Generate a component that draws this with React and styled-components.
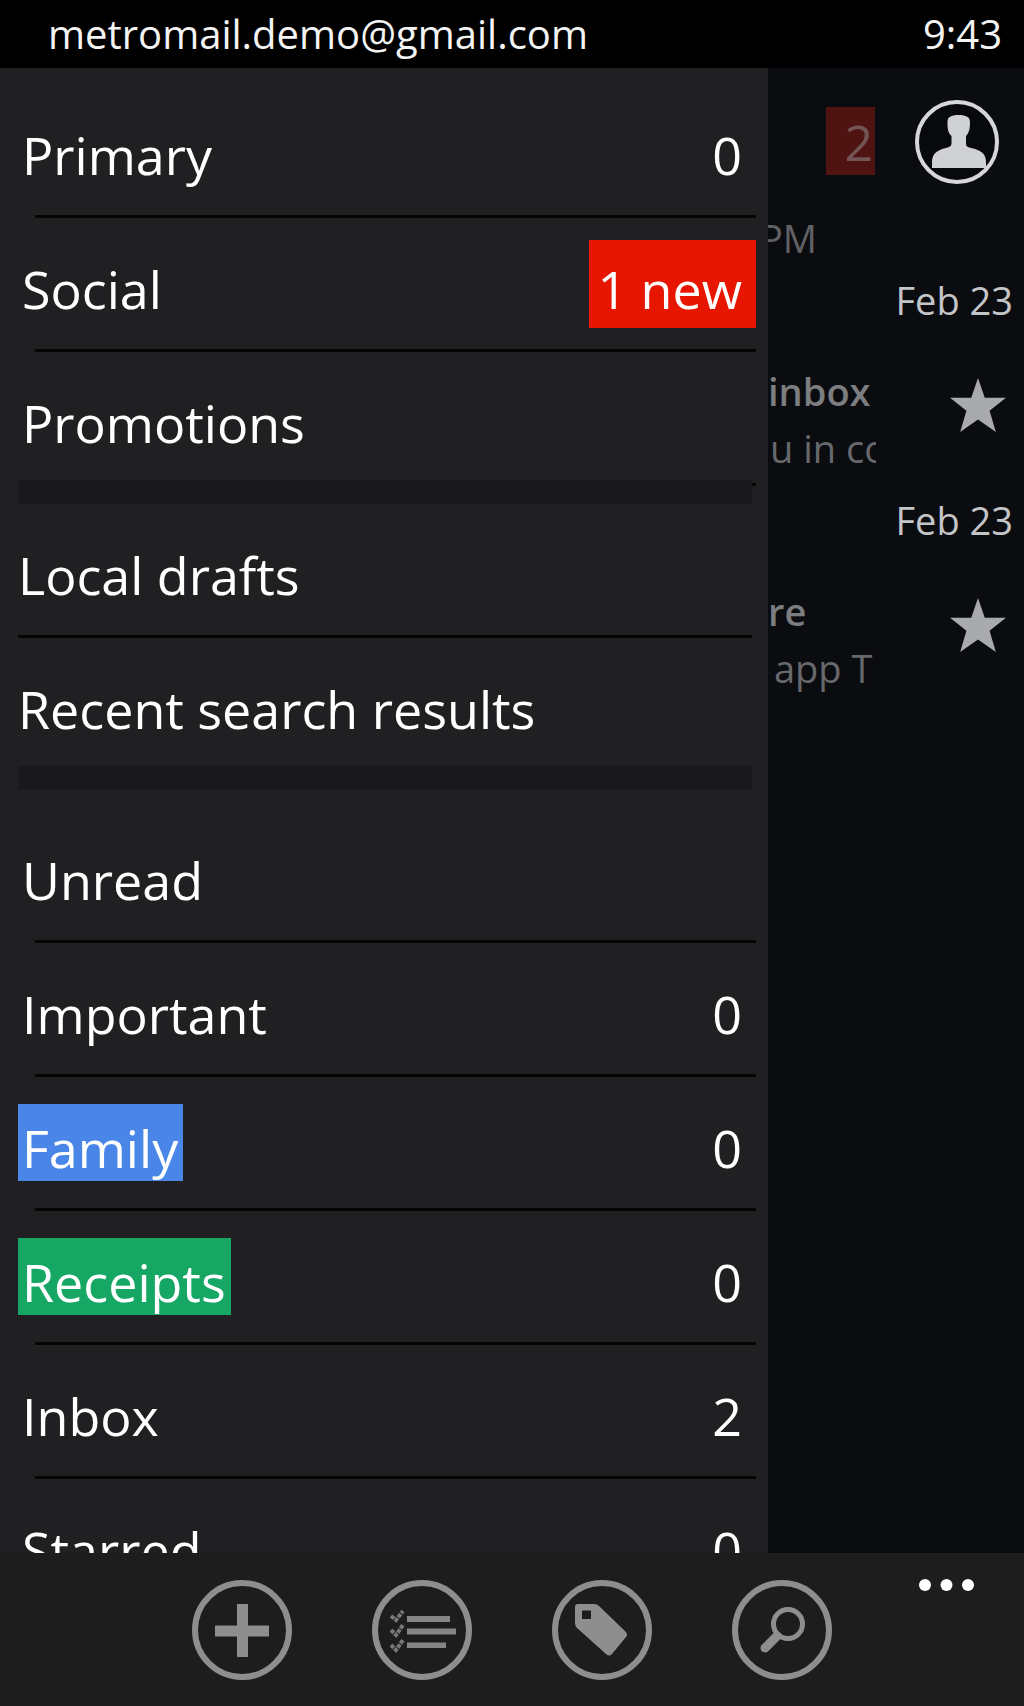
import React, { useState } from "react";
import styled, { createGlobalStyle } from "styled-components";

const GlobalStyle = createGlobalStyle`
  * {
    box-sizing: border-box;
  }
  body {
    margin: 0;
    background: #000;
    color: #fff;
    font-family: "Open Sans", "Noto Sans", sans-serif;
  }
  button {
    margin: 0;
    padding: 0;
    border: 0;
    background: none;
    color: inherit;
    font: inherit;
    text-align: left;
    cursor: pointer;
  }
  svg {
    display: block;
  }
`;

const Phone = styled.div`
  display: flex;
  flex-direction: column;
  height: 100vh;
  overflow: hidden;
`;

const StatusBar = styled.header`
  display: flex;
  justify-content: space-between;
  flex: none;
  height: 68px;
  padding: 0 22px 0 48px;
  color: #f4f4f4;
  font-size: 40px;
  line-height: 68px;
`;

const Main = styled.main`
  display: flex;
  flex: 1;
  min-height: 0;
`;

const Drawer = styled.nav`
  width: 75%;
  background: #202022;
  overflow: hidden;
`;

const Group = styled.ul`
  margin: 0;
  padding: ${(p) => p.$top || 0}px ${(p) => (p.$local ? 16 : 12)}px 0 18px;
  list-style: none;
`;

const Item = styled.li`
  display: flex;
  flex-direction: column;
  height: 134px;

  &::after {
    content: "";
    height: 3px;
    margin-left: ${(p) => (p.$local ? 0 : 17)}px;
    background: #050505;
  }
`;

const RowButton = styled.button`
  display: flex;
  flex: 1;
  align-items: center;
  justify-content: space-between;
  font-size: 52px;
`;

const Label = styled.span`
  padding: 10px 5px 0 ${(p) => (p.$local ? 0 : 4)}px;
  line-height: 67px;
  background: ${(p) => p.$color || "transparent"};
`;

const Count = styled.span`
  padding: 10px 14px 0 8px;
  line-height: 78px;
  background: ${(p) => (p.$fresh ? "#e61600" : "transparent")};
`;

const Band = styled.div`
  position: relative;
  height: 24px;
  margin: -6px 16px 0 18px;
  background: #19191b;
`;

const MailPane = styled.section`
  flex: 1;
  min-width: 0;
  padding-top: 32px;
  background: #0b0c10;
  overflow: hidden;
`;

const PaneHeader = styled.div`
  display: flex;
  align-items: flex-start;
  justify-content: flex-end;
  gap: 40px;
  height: 114px;
  padding-right: 25px;
`;

const Unseen = styled.span`
  width: 49px;
  height: 68px;
  margin-top: 7px;
  padding-right: 2px;
  background: #4f1411;
  color: #735556;
  font-size: 50px;
  line-height: 70px;
  text-align: right;
`;

const Synced = styled.div`
  display: flex;
  justify-content: flex-end;
  width: 49px;
  margin-bottom: 14px;
  color: #606164;
  font-size: 38px;
  line-height: 48px;
  white-space: nowrap;
  overflow: hidden;
`;

const Mail = styled.article`
  display: grid;
  grid-template-columns: 108px 1fr;
  row-gap: 39px;
  margin-bottom: 19px;
  font-size: 38px;
`;

const MailDate = styled.time`
  grid-column: 1 / -1;
  padding-right: 11px;
  color: #c4c5c7;
  line-height: 48px;
  text-align: right;
`;

const MailText = styled.div`
  display: flex;
  flex-direction: column;
  line-height: 57px;
  white-space: pre;
  overflow: hidden;
`;

const Subject = styled.span`
  color: #7c7d80;
  font-weight: 600;
`;

const Preview = styled.span`
  padding-left: ${(p) => p.$indent}px;
  color: #67686b;
`;

const StarButton = styled.button`
  justify-self: end;
  align-self: start;
  margin: 15px 18px 0 0;
`;

const AppBar = styled.footer`
  display: grid;
  grid-template-columns: 1fr auto 1fr;
  flex: none;
  height: 153px;
  padding-top: 26px;
  background: #1d1d1d;
`;

const Tools = styled.div`
  display: flex;
  grid-column: 2;
  align-items: flex-start;
  gap: 80px;
`;

const MoreButton = styled.button`
  justify-self: end;
  align-self: start;
  margin-right: 48px;
`;

const categories = [
  { name: "Primary", count: "0" },
  { name: "Social", count: "1 new", fresh: true },
  { name: "Promotions" },
];

const localFolders = [{ name: "Local drafts" }, { name: "Recent search results" }];

const labels = [
  { name: "Unread" },
  { name: "Important", count: "0" },
  { name: "Family", count: "0", color: "#4986e7" },
  { name: "Receipts", count: "0", color: "#16a765" },
  { name: "Inbox", count: "2" },
  { name: "Starred", count: "0" },
];

const mails = [
  { id: 1, date: "Feb 23", subject: "inbox", preview: "u in co", indent: 2 },
  { id: 2, date: "Feb 23", subject: "re", preview: "app T", indent: 6 },
];

const Folders = ({ items, top, local }) => (
  <Group $top={top} $local={local}>
    {items.map((item) => (
      <Item key={item.name} $local={local}>
        <RowButton type="button">
          <Label $color={item.color} $local={local}>
            {item.name}
          </Label>
          {item.count && <Count $fresh={item.fresh}>{item.count}</Count>}
        </RowButton>
      </Item>
    ))}
  </Group>
);

const ProfileIcon = () => (
  <svg width="84" height="84" viewBox="0 0 84 84">
    <circle cx="42" cy="42" r="40" fill="#08090b" stroke="#d6d7d9" strokeWidth="4" />
    <path
      fill="#d0d1d3"
      d="M43.500 15C36 15 32.500 17 32.500 22C32.500 29 33 33 36.500 36V43C36.500 46 35 47 31 48C22 50 17 54 17 62V68H71V62C71 54 66 50 56 48C52 47 51 46 51 43V36C54 33 55 29 55 22C55 17 51 15 43.500 15Z"
    />
  </svg>
);

const StarIcon = ({ on }) => (
  <svg width="56" height="54" viewBox="0 0 58 56">
    <path
      fill={on ? "#a9aaac" : "#3a3b3e"}
      d="M29 0L36 20.500H58L41 34L47.500 56L29 43L10.500 56L17 34L0 20.500H22Z"
    />
  </svg>
);

const Ring = ({ children }) => (
  <svg width="100" height="102" viewBox="0 -1 100 102">
    <circle cx="50" cy="50" r="47" fill="none" stroke="#8e8e8e" strokeWidth="6" />
    {children}
  </svg>
);

const MailRow = ({ mail }) => {
  const [starred, setStarred] = useState(true);

  return (
    <Mail>
      <MailDate>{mail.date}</MailDate>
      <MailText>
        <Subject>{mail.subject}</Subject>
        <Preview $indent={mail.indent}>{mail.preview}</Preview>
      </MailText>
      <StarButton type="button" aria-label="Star" onClick={() => setStarred(!starred)}>
        <StarIcon on={starred} />
      </StarButton>
    </Mail>
  );
};

const App = () => (
  <Phone>
    <GlobalStyle />
    <StatusBar>
      <span>metromail.demo@gmail.com</span>
      <time>9:43</time>
    </StatusBar>

    <Main>
      <Drawer>
        <Folders items={categories} top={16} />
        <Band />
        <Folders items={localFolders} local />
        <Band />
        <Folders items={labels} top={19} />
      </Drawer>

      <MailPane>
        <PaneHeader>
          <Unseen>2</Unseen>
          <button type="button" aria-label="Account">
            <ProfileIcon />
          </button>
        </PaneHeader>
        <Synced>PM</Synced>
        {mails.map((mail) => (
          <MailRow key={mail.id} mail={mail} />
        ))}
      </MailPane>
    </Main>

    <AppBar>
      <Tools>
        <button type="button" aria-label="New mail">
          <Ring>
            <path fill="#8e8e8e" d="M45 24H56V45.500H77V56.500H56V77H45V56.500H23V45.500H45Z" />
          </Ring>
        </button>
        <button type="button" aria-label="Select">
          <Ring>
            <path fill="#858585" d="M35 36H78V42H35ZM35 48.500H84V54.500H35ZM35 62.500H74V68H35Z" />
            <path
              fill="none"
              stroke="#787878"
              strokeWidth="4"
              strokeDasharray="4 1"
              d="M19 36L24 40L31 31M19 50L24 55L31 45M19 65L24 70L31 60"
            />
          </Ring>
        </button>
        <button type="button" aria-label="Labels">
          <Ring>
            <path
              fill="#8e8e8e"
              fillRule="evenodd"
              d="M26 24H42Q45 24 47 26L74 52Q76 55 74 57L60 74Q57 77 54 74L25 48Q23 46 23 43V27Q23 24 26 24ZM30 30.500V39H39V30.500Z"
            />
          </Ring>
        </button>
        <button type="button" aria-label="Search">
          <Ring>
            <g fill="none" stroke="#8e8e8e">
              <circle cx="56" cy="44" r="14.500" strokeWidth="5" />
              <path d="M45 56L33 68" strokeWidth="9" strokeLinecap="round" />
            </g>
          </Ring>
        </button>
      </Tools>
      <MoreButton type="button" aria-label="More">
        <svg width="58" height="14" viewBox="0 0 58 14" fill="#fff">
          <circle cx="7" cy="6" r="6" />
          <circle cx="28.500" cy="6" r="6" />
          <circle cx="50" cy="6" r="6" />
        </svg>
      </MoreButton>
    </AppBar>
  </Phone>
);

export default App;
